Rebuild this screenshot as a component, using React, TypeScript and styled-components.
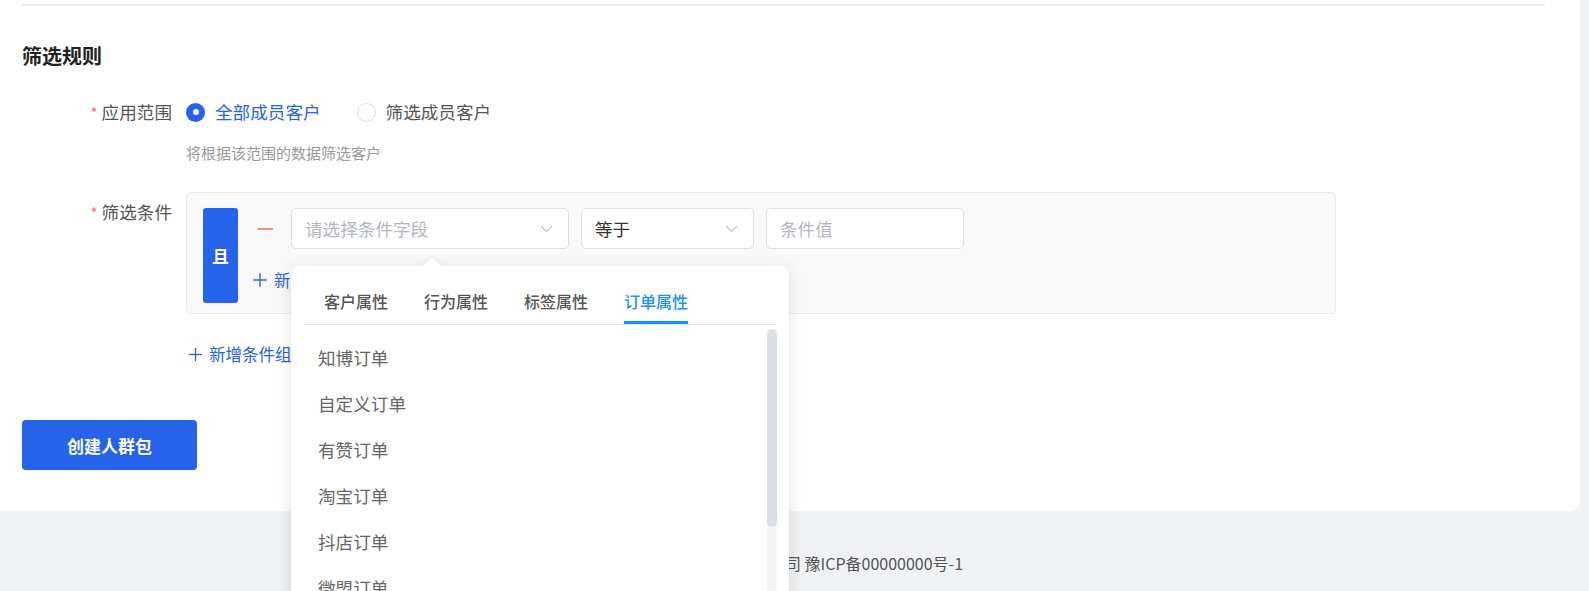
import React from "react";
import styled, { createGlobalStyle, css } from "styled-components";

const GlobalStyle = createGlobalStyle`
  html, body {
    margin: 0;
    padding: 0;
    background: #f0f2f5;
  }
  body {
    font-family: "Noto Sans CJK SC", "Noto Sans", "Liberation Sans", sans-serif;
    color: #333;
    -webkit-font-smoothing: antialiased;
  }
  * { box-sizing: border-box; }
`;

const PRIMARY = "#2563eb";
const TAB_ACTIVE = "#1890ff";

const Page = styled.div`
  width: 1589px;
  height: 591px;
  overflow: hidden;
  display: flex;
  flex-direction: column;
  background: #f0f2f5;
`;

const Card = styled.section`
  width: 1580px;
  height: 511px;
  flex-shrink: 0;
  background: #fff;
  border-bottom-right-radius: 10px;
  padding: 4px 35px 0 22px;
`;

const Divider = styled.div`
  height: 2px;
  background: #ebedf2;
`;

const Heading = styled.h2`
  margin: 36px 0 0;
  font-size: 20px;
  line-height: 28px;
  font-weight: 700;
  color: #222;
`;

const FormItem = styled.div<{ $mt: number }>`
  display: flex;
  align-items: flex-start;
  margin-top: ${(p) => p.$mt}px;
`;

const Label = styled.div`
  width: 164px;
  flex-shrink: 0;
  padding-right: 14px;
  text-align: right;
  font-size: 17.6px;
  line-height: 40px;
  color: #555;
  white-space: nowrap;
`;

const Star = styled.span`
  color: #f56c6c;
  font-size: 15px;
  margin-right: 4px;
`;

const Control = styled.div`
  display: flex;
  flex-direction: column;
`;

const RadioGroup = styled.div`
  display: flex;
  align-items: center;
  height: 40px;
  gap: 36px;
`;

const RadioOption = styled.label<{ $checked?: boolean }>`
  display: flex;
  align-items: center;
  gap: 10px;
  font-size: 17.6px;
  line-height: 24px;
  color: ${(p) => (p.$checked ? PRIMARY : "#555")};
  cursor: pointer;
`;

const RadioDot = styled.span<{ $checked?: boolean }>`
  width: 19px;
  height: 19px;
  border-radius: 50%;
  display: inline-flex;
  align-items: center;
  justify-content: center;
  ${(p) =>
    p.$checked
      ? css`
          background: ${PRIMARY};
          &::after {
            content: "";
            width: 6px;
            height: 6px;
            border-radius: 50%;
            background: #fff;
          }
        `
      : css`
          border: 1px solid #dcdfe6;
          background: #fff;
        `}
`;

const Hint = styled.div`
  margin-top: 11px;
  font-size: 15px;
  line-height: 20px;
  color: #999;
`;

const ConditionBox = styled.div`
  width: 1150px;
  height: 122px;
  display: flex;
  padding: 15px 15px 10px 16px;
  background: #f9f9fa;
  border: 1px solid #e9eaef;
  border-radius: 5px;
`;

const AndBlock = styled.div`
  width: 35px;
  flex-shrink: 0;
  background: ${PRIMARY};
  border-radius: 3px;
  display: flex;
  align-items: center;
  justify-content: center;
  color: #fff;
  font-size: 17px;
  font-weight: 700;
`;

const Rules = styled.div`
  margin-left: 20px;
  display: flex;
  flex-direction: column;
`;

const RuleRow = styled.div`
  display: flex;
  align-items: center;
  height: 41px;
`;

const Minus = styled.span`
  width: 15px;
  height: 2px;
  background: #f28b82;
  margin-right: 18px;
  flex-shrink: 0;
`;

const Field = styled.div<{ $w: number; $ml?: number }>`
  position: relative;
  width: ${(p) => p.$w}px;
  height: 41px;
  margin-left: ${(p) => p.$ml ?? 0}px;
  background: #fff;
  border: 1px solid #dcdfe6;
  border-radius: 5px;
  display: flex;
  align-items: center;
  padding: 0 15px 0 13px;
  font-size: 17.6px;
`;

const FieldText = styled.span<{ $placeholder?: boolean }>`
  flex: 1;
  color: ${(p) => (p.$placeholder ? "#b4b7be" : "#333")};
  white-space: nowrap;
`;

const AddLink = styled.div<{ $mt: number; $ml: number; $size: number }>`
  display: flex;
  align-items: center;
  gap: 7px;
  margin-top: ${(p) => p.$mt}px;
  margin-left: ${(p) => p.$ml}px;
  color: ${PRIMARY};
  font-size: ${(p) => p.$size}px;
  line-height: 22px;
  cursor: pointer;
`;

const PrimaryButton = styled.button`
  margin-top: 55px;
  width: 175px;
  height: 50px;
  border: none;
  border-radius: 4px;
  background: ${PRIMARY};
  color: #fff;
  font-family: inherit;
  font-size: 17px;
  font-weight: 700;
  cursor: pointer;
`;

/* dropdown panel for the condition field */
const Popover = styled.div`
  position: absolute;
  left: -1px;
  top: 57px;
  width: 498px;
  height: 345px;
  background: #fff;
  border-radius: 9px;
  box-shadow: 0 3px 16px rgba(0, 0, 0, 0.12);
  z-index: 10;
  display: flex;
  flex-direction: column;
  padding: 0 12px 0 13px;
`;

const Arrow = styled.span`
  position: absolute;
  top: -6px;
  left: 135px;
  width: 12px;
  height: 12px;
  background: #fff;
  transform: rotate(45deg);
  box-shadow: -2px -2px 4px rgba(0, 0, 0, 0.04);
`;

const Tabs = styled.div`
  display: flex;
  gap: 36px;
  padding: 24px 0 0 20px;
  border-bottom: 1px solid #e4e7ed;
`;

const Tab = styled.div<{ $active?: boolean }>`
  width: 64px;
  font-size: 16px;
  font-weight: 500;
  line-height: 22px;
  white-space: nowrap;
  padding-bottom: 9px;
  border-bottom: 3px solid ${(p) => (p.$active ? TAB_ACTIVE : "transparent")};
  color: ${(p) => (p.$active ? TAB_ACTIVE : "#555")};
  cursor: pointer;
`;

const ListArea = styled.div`
  flex: 1;
  display: flex;
  min-height: 0;
`;

const Options = styled.ul`
  flex: 1;
  list-style: none;
  margin: 0;
  padding: 10px 0 0 14px;
`;

const Option = styled.li`
  height: 46px;
  line-height: 46px;
  font-size: 17.6px;
  color: #666;
`;

const ScrollTrack = styled.div`
  width: 10px;
  margin-top: 4px;
  background: #f4f5f8;
  border-radius: 5px;
  display: flex;
  flex-direction: column;
`;

const ScrollThumb = styled.div`
  height: 198px;
  background: #dcdee5;
  border-radius: 5px;
`;

const Footer = styled.footer`
  flex: 1;
  display: flex;
  justify-content: center;
  padding-top: 41px;
  width: 1580px;
  font-size: 16px;
  line-height: 22px;
  color: #555;
  white-space: nowrap;
`;

const Chevron = () => (
  <svg width="13" height="8" viewBox="0 0 13 8" fill="none">
    <polyline points="1,1 6.5,6.5 12,1" stroke="#c0c4cc" strokeWidth="1.2" />
  </svg>
);

const Plus = ({ size = 14 }: { size?: number }) => (
  <svg width={size} height={size} viewBox="0 0 14 14" fill="none">
    <line x1="7" y1="0" x2="7" y2="14" stroke={PRIMARY} strokeWidth="1.4" />
    <line x1="0" y1="7" x2="14" y2="7" stroke={PRIMARY} strokeWidth="1.4" />
  </svg>
);

const tabs = ["客户属性", "行为属性", "标签属性", "订单属性"];
const orderFields = ["知博订单", "自定义订单", "有赞订单", "淘宝订单", "抖店订单", "微盟订单", "小鹅通订单"];

export default function App() {
  return (
    <>
      <GlobalStyle />
      <Page>
        <Card>
          <Divider />
          <Heading>筛选规则</Heading>

          <FormItem $mt={22}>
            <Label>
              <Star>*</Star>应用范围
            </Label>
            <Control>
              <RadioGroup>
                <RadioOption $checked>
                  <RadioDot $checked />
                  全部成员客户
                </RadioOption>
                <RadioOption>
                  <RadioDot />
                  筛选成员客户
                </RadioOption>
              </RadioGroup>
              <Hint>将根据该范围的数据筛选客户</Hint>
            </Control>
          </FormItem>

          <FormItem $mt={29}>
            <Label>
              <Star>*</Star>筛选条件
            </Label>
            <Control>
              <ConditionBox>
                <AndBlock>且</AndBlock>
                <Rules>
                  <RuleRow>
                    <Minus />
                    <Field $w={278}>
                      <FieldText $placeholder>请选择条件字段</FieldText>
                      <Chevron />
                      <Popover>
                        <Arrow />
                        <Tabs>
                          {tabs.map((t) => (
                            <Tab key={t} $active={t === "订单属性"}>
                              {t}
                            </Tab>
                          ))}
                        </Tabs>
                        <ListArea>
                          <Options>
                            {orderFields.map((f) => (
                              <Option key={f}>{f}</Option>
                            ))}
                          </Options>
                          <ScrollTrack>
                            <ScrollThumb />
                          </ScrollTrack>
                        </ListArea>
                      </Popover>
                    </Field>
                    <Field $w={173} $ml={12}>
                      <FieldText>等于</FieldText>
                      <Chevron />
                    </Field>
                    <Field $w={198} $ml={12}>
                      <FieldText $placeholder>条件值</FieldText>
                    </Field>
                  </RuleRow>
                  <AddLink $mt={20} $ml={-5} $size={16.5}>
                    <Plus />
                    新增条件
                  </AddLink>
                </Rules>
              </ConditionBox>
              <AddLink $mt={29} $ml={3} $size={16.5}>
                <Plus size={13} />
                新增条件组
              </AddLink>
            </Control>
          </FormItem>

          <PrimaryButton>创建人群包</PrimaryButton>
        </Card>
        <Footer>© 2024 某某科技有限公司 豫ICP备00000000号-1</Footer>
      </Page>
    </>
  );
}
